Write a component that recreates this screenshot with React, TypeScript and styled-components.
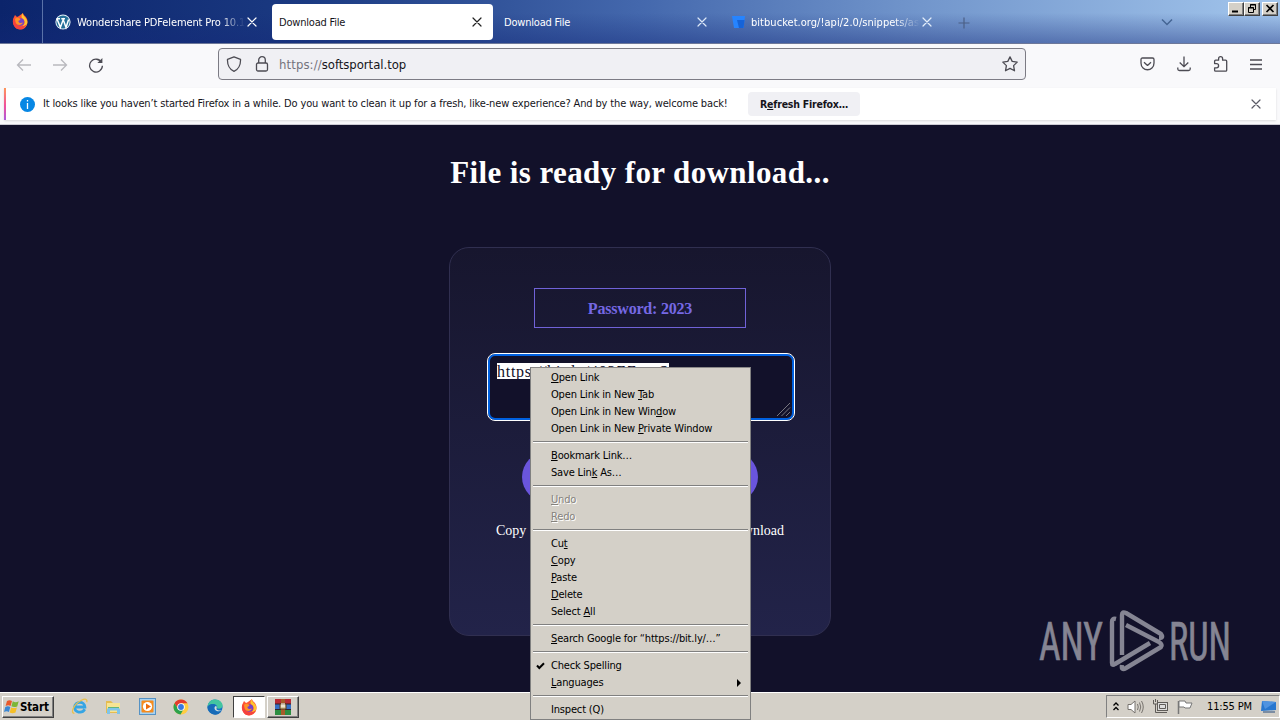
import React from "react";
import styled, { createGlobalStyle, css } from "styled-components";

const GlobalStyle = createGlobalStyle`
  * { box-sizing: border-box; }
  html, body { margin: 0; padding: 0; overflow: hidden; }
  body {
    font-family: "DejaVu Sans Condensed", "DejaVu Sans", sans-serif;
    font-stretch: condensed;
    font-size: 11px;
    color: #15141a;
  }
  svg { display: block; flex: none; }
`

type MenuEntry = { label?: string; k?: number; disabled?: boolean; checked?: boolean; sub?: boolean };

const menu: MenuEntry[] = [
  { label: "Open Link", k: 0 },
  { label: "Open Link in New Tab", k: 17 },
  { label: "Open Link in New Window", k: 20 },
  { label: "Open Link in New Private Window", k: 17 },
  {},
  { label: "Bookmark Link…", k: 0 },
  { label: "Save Link As…", k: 8 },
  {},
  { label: "Undo", k: 0, disabled: true },
  { label: "Redo", k: 0, disabled: true },
  {},
  { label: "Cut", k: 2 },
  { label: "Copy", k: 0 },
  { label: "Paste", k: 0 },
  { label: "Delete", k: 0 },
  { label: "Select All", k: 7 },
  {},
  { label: "Search Google for “https://bit.ly/…”", k: 0 },
  {},
  { label: "Check Spelling", checked: true },
  { label: "Languages", k: 0, sub: true },
  {},
  { label: "Inspect (Q)" },
];

const CloseX = ({ color }: { color: string }) => (
  <svg width="10" height="10" viewBox="0 0 10 10" stroke={color} strokeWidth="1.2" strokeLinecap="round">
    <path d="M1 1L9 9M9 1L1 9" />
  </svg>
);

const FirefoxLogo = () => (
  <svg width="17" height="17" viewBox="0 0 17 17">
    <path d="M2 4L3 2L5 4L7 3C8 2 10 1 11 0C11 2 14 3 15 6C17 11 13 17 8 16.6C2 16.4-1 9 2 4Z" fill="#ff5634" />
    <path d="M11 0C10 3 15 4 15.4 9C15 14 11 16 8 14C13 13 14 8 11 6C9 5 9 2 11 0Z" fill="#ffc52e" />
    <path d="M1 8C1 14 5 17 9 16C12 15.5 14 13.5 15 11C11 14.5 5 14 4 9L2 5Z" fill="#f5413e" />
    <circle cx="8.5" cy="9" r="3.7" fill="#7542c8" />
    <path d="M3 6C5 4 7 5 8.5 6.2C8 7.5 6.5 7.2 6.4 8.3C6.5 10 9 10.5 11 9.6C10 12.5 4.4 13 3.5 9Z" fill="#ff9226" />
  </svg>
);

const EdgeLogo = () => (
  <svg width="16" height="16" viewBox="0 0 16 16">
    <circle cx="8" cy="8" r="7.6" fill="#1572c4" />
    <path d="M.5 8C1 3 4 .4 8 .4C13 .4 16 4 15.6 7C15 10 11.6 10 10 9.2C11 6.5 8 4.5 5 5.2C2.5 5.8 1 7 .5 8Z" fill="#43c5a0" />
    <path d="M.5 8C2 4.7 7 4 9 7C6 7 5.4 10 8 12C10 13.4 12.5 13 14.5 12C12 16 8 16 6 15.3C2.4 14 .5 11 .5 8Z" fill="#176bb7" />
    <path d="M9 7.1C7.4 7.6 7 9.5 8.2 11C10 12.7 13 12.5 14.7 11.5C12 11.8 9 11 9.5 9.4C9.9 8.5 9.9 7.6 9 7.1Z" fill="#d5ddd9" />
  </svg>
);

const ChromeLogo = () => (
  <svg width="16" height="16" viewBox="0 0 16 16">
    <circle cx="8" cy="8" r="7.5" fill="#ffcd41" />
    <path d="M1.5 4.2A7.5 7.5 0 0 1 14.5 4.3H8L5 10Z" fill="#e33b2e" />
    <path d="M1.5 4.2A7.5 7.5 0 0 0 7.5 15.5L11 9.5L5 9.8Z" fill="#2ca24c" />
    <circle cx="8" cy="8" r="3.8" fill="#fff" />
    <circle cx="8" cy="8" r="2.9" fill="#3878e0" />
  </svg>
);

const IeLogo = () => (
  <svg width="17" height="17" viewBox="0 0 17 17" fill="none">
    <path d="M13.8 11.3C11 16 3.5 14.6 3.6 9C4 3 13.6 2.7 13.9 9H5" stroke="#35a5e4" strokeWidth="2.8" />
    <path d="M3.4 15.3C-1 15.6 2.4 6.5 10 2.5C14 .5 16.7.7 15.7 4.2" stroke="#e9c04c" strokeWidth="1.3" />
  </svg>
);

const ExplorerLogo = () => (
  <svg width="17" height="16" viewBox="0 0 17 16">
    <path d="M1 2H6L8 4H14V14H1Z" fill="#e5bc51" />
    <path d="M2 4H15V13H2Z" fill="#f7e492" />
    <path d="M3 8H14V10H3Z" fill="#63b77b" />
    <path d="M2 15V10.5Q2 9 3.6 9H13.4Q15 9 15 10.5V15H12V11.5H5V15Z" fill="#7fc4e9" />
  </svg>
);

const MediaLogo = () => (
  <svg width="17" height="17" viewBox="0 0 17 17">
    <rect x=".5" y=".5" width="16" height="16" fill="#a7d3f3" stroke="#5592c4" />
    <rect x="2.5" y="2.5" width="12" height="12" rx="1" fill="#f68b1d" />
    <circle cx="8.5" cy="8.5" r="4.6" fill="#fff" />
    <path d="M7 5.5L12 8.5L7 11.5Z" fill="#ed6c0d" />
  </svg>
);

const RarLogo = () => (
  <svg width="18" height="16" viewBox="0 0 18 16">
    <path d="M1 0H17V5H1Z" fill="#b92a34" />
    <path d="M1 5H17V10H1Z" fill="#356fc5" />
    <path d="M1 10H17V16H1Z" fill="#2c8e41" />
    <path d="M1 5H17M1 10.5H17" stroke="#33212b" />
    <path d="M7 0H11V16H7Z" fill="#a85c2a" />
    <path d="M6 5H12V10H6Z" fill="#d9c9a0" stroke="#5d3b19" />
    <path d="M8 4V8M10 4V8" stroke="#fff" />
  </svg>
);

const WindowsLogo = () => (
  <svg width="16" height="16" viewBox="0 0 16 16">
    <path d="M3 2Q5.5.4 8 2L6.6 7Q4.4 5.6 1.6 7Z" fill="#e8592b" />
    <path d="M8.8 2.3Q11.5 4 14.7 2.3L13.2 7.4Q10 8.8 7.4 7.3Z" fill="#7cb637" />
    <path d="M1.3 8Q4 6.7 6.3 8.1L4.9 13Q2.7 11.6 0 13Z" fill="#3a87d3" />
    <path d="M7.1 8.4Q10 9.8 12.9 8.4L11.5 13.4Q8.5 15 5.7 13.4Z" fill="#f5bf28" />
  </svg>
);

const App = () => (
  <Screen>
    <GlobalStyle />
    <TabStrip>
      <FirefoxView><FirefoxLogo /></FirefoxView>
      <Tab $w={229} $pl={12}>
        <svg width="16" height="16" viewBox="0 0 16 16">
          <circle cx="8" cy="8" r="7.6" fill="#e7f2f8" />
          <circle cx="8" cy="8" r="6.6" fill="#246f98" />
          <path d="M2 5L5.4 13.4L8.2 5.6L11 13.4L13.6 5.4M1.5 4.8H5M6.3 4.8H10" stroke="#fff" strokeWidth="1.5" fill="none" />
        </svg>
        <TabTitle $w={168} $ml={6} $ls={-0.12} $fade>Wondershare PDFelement Pro 10.1</TabTitle>
        <CloseX color="#fff" />
      </Tab>
      <Tab $w={221} $pl={7} $active>
        <TabTitle $w={193} $ls={-0.2}>Download File</TabTitle>
        <CloseX color="#222" />
      </Tab>
      <Tab $w={230} $pl={11}>
        <TabTitle $w={193} $ls={-0.2}>Download File</TabTitle>
        <CloseX color="#dce8f8" />
      </Tab>
      <Tab $w={230} $pl={9}>
        <svg width="14" height="12" viewBox="0 0 14 12">
          <path d="M0 0H13L11.5 12H2Z" fill="#2684ff" />
          <path d="M5 4H12.5L11.5 12H7Z" fill="#1563d8" />
        </svg>
        <TabTitle $w={169} $ml={5} $ls={0.04} $fade>bitbucket.org/!api/2.0/snippets/as</TabTitle>
        <CloseX color="#e4eefa" />
      </Tab>
      <NewTab>
        <svg width="12" height="12" viewBox="0 0 12 12"><path d="M6 .5V11.5M.5 6H11.5" stroke="#4b5f85" strokeWidth="1.2" /></svg>
      </NewTab>
      <AllTabs>
        <svg width="12" height="8" viewBox="0 0 12 8"><path d="M1 1.5L6 6.5L11 1.5" stroke="#456594" strokeWidth="1.5" fill="none" /></svg>
      </AllTabs>
      <Caption>
        <CaptionButton><svg width="10" height="9" viewBox="0 0 10 9"><path d="M1 7.5H7" stroke="#000" strokeWidth="2" /></svg></CaptionButton>
        <CaptionButton>
          <svg width="10" height="9" viewBox="0 0 10 9" fill="none" stroke="#000"><path d="M3.5 3V.5H8.5V5.5H6.5M3 1H9M1.5 3.5H6.5V8.5H1.5ZM1 4H7" /></svg>
        </CaptionButton>
        <CaptionButton $gap><svg width="10" height="9" viewBox="0 0 10 9"><path d="M1.5 1L8.5 8M8.5 1L1.5 8" stroke="#000" strokeWidth="1.7" /></svg></CaptionButton>
      </Caption>
    </TabStrip>

    <NavBar>
      <NavIcons>
        <svg width="16" height="14" viewBox="0 0 16 14" fill="none" stroke="#b9b9be" strokeWidth="1.3"><path d="M15 7H1.5M7 1.5L1.5 7L7 12.5" /></svg>
        <svg width="16" height="14" viewBox="0 0 16 14" fill="none" stroke="#b9b9be" strokeWidth="1.3"><path d="M1 7H14.5M9 1.5L14.5 7L9 12.5" /></svg>
        <svg width="16" height="16" viewBox="0 0 16 16" fill="none" stroke="#4c4b53" strokeWidth="1.3"><path d="M13.6 5.5A6.4 6.4 0 1 0 14.4 8.8" /><path d="M14.4 1V6H9.4Z" fill="#4c4b53" stroke="none" /></svg>
      </NavIcons>
      <UrlBar>
        <svg width="16" height="16" viewBox="0 0 16 16" fill="none" stroke="#4c4b53" strokeWidth="1.3"><path d="M8 .8L14.5 3.3C14.8 8.6 12.2 13.5 8 15.3C3.8 13.5 1.2 8.6 1.5 3.3Z" strokeLinejoin="round" /></svg>
        <svg width="14" height="16" viewBox="0 0 14 16" fill="none" stroke="#4c4b53" strokeWidth="1.3"><rect x="1.5" y="7" width="11" height="8" rx="1.5" /><path d="M3.7 7V4A3.3 3.3 0 0 1 10.3 4V7" /></svg>
        <Url><span>https://</span>softsportal.top</Url>
        <svg width="16" height="16" viewBox="0 0 16 16" fill="none" stroke="#4c4b53" strokeWidth="1.3" strokeLinejoin="round"><path d="M8 .9L10.2 5.4L15.2 6.1L11.6 9.6L12.5 14.8L8 12.4L3.5 14.8L4.4 9.6L.8 6.1L5.8 5.4Z" /></svg>
      </UrlBar>
      <NavActions>
        <svg width="15" height="14" viewBox="0 0 15 14" fill="none" stroke="#4c4b53" strokeWidth="1.3"><path d="M2.5 1H12.5Q14 1 14 2.5V6C14 15 1 15 1 6V2.5Q1 1 2.5 1ZM4 5.2L7.5 8.4L11 5.2" strokeLinejoin="round" /></svg>
        <svg width="14" height="16" viewBox="0 0 14 16" fill="none" stroke="#4c4b53" strokeWidth="1.3"><path d="M7 .5V10.5M2.7 6.5L7 10.6L11.3 6.5M.8 11.5V13Q.8 14.5 2.5 14.5H11.5Q13.2 14.5 13.2 13V11.5" /></svg>
        <svg width="15" height="16" viewBox="0 0 15 16" fill="none" stroke="#4c4b53" strokeWidth="1.3" strokeLinejoin="round"><path d="M1.6 7.6V5.2Q1.6 4.2 2.6 4.2H5.6V2.7A2 2 0 0 1 9.6 2.7V4.2H12.6Q13.7 4.2 13.7 5.3V14.2Q13.7 15.2 12.7 15.2H2.6Q1.6 15.2 1.6 14.2V11.8H3.5A2 2 0 0 0 3.5 7.6Z" /></svg>
        <svg width="12" height="11" viewBox="0 0 12 11"><path d="M0 1H12M0 5.5H12M0 10H12" stroke="#4c4b53" strokeWidth="1.3" /></svg>
      </NavActions>
    </NavBar>

    <NoticeWrap>
      <Notice>
        <svg width="15" height="15" viewBox="0 0 15 15"><circle cx="7.5" cy="7.5" r="7.5" fill="#0787e4" /><path d="M7.5 3V4.6M7.5 6V12" stroke="#fff" strokeWidth="1.3" /></svg>
        <NoticeText>It looks like you haven’t started Firefox in a while. Do you want to clean it up for a fresh, like-new experience? And by the way, welcome back!</NoticeText>
        <RefreshButton>R<u>e</u>fresh Firefox…</RefreshButton>
        <NoticeClose><CloseX color="#5b5b66" /></NoticeClose>
      </Notice>
    </NoticeWrap>

    <Page>
      <Heading>File is ready for download...</Heading>
      <Card>
        <Password>Password: 2023</Password>
        <LinkBox>
          <mark>https://bit.ly/403ZZmgS</mark>
          <Grip width="14" height="14" viewBox="0 0 14 14" stroke="#77767f"><path d="M0 13L13 0M4.5 13L13 4.5M9 13L13 9" /></Grip>
        </LinkBox>
        <CopyButton />
        <Hint>Copy the link and open in new tab to download</Hint>
      </Card>
      <Watermark width="194" height="66" viewBox="0 0 194 66">
        <g fill="#858593" stroke="#858593" strokeWidth="0.7" fontFamily="Roboto, sans-serif" fontSize="53">
          <text x="1" y="50.5" textLength="64" lengthAdjust="spacingAndGlyphs">ANY</text>
          <text x="131" y="50.5" textLength="62" lengthAdjust="spacingAndGlyphs">RUN</text>
        </g>
        <g fill="none" stroke="#858593" strokeWidth="4.4" strokeLinejoin="round">
          <path d="M78 10Q74 9 74 13V54Q74 57 77 55L112 34" />
          <path d="M84 46V6Q84 2 88 4L123 25Q126 29 121 29" />
          <path d="M84 56Q83 62 88 59L123 38Q125 36 121 33L88 16" />
        </g>
      </Watermark>
    </Page>

    <Taskbar>
      <StartButton><WindowsLogo />Start</StartButton>
      <QuickLaunch>
        <Launch><IeLogo /></Launch>
        <Launch><ExplorerLogo /></Launch>
        <Launch><MediaLogo /></Launch>
        <Launch><ChromeLogo /></Launch>
        <Launch><EdgeLogo /></Launch>
      </QuickLaunch>
      <Task $pressed><FirefoxLogo /></Task>
      <Task><RarLogo /></Task>
      <Tray>
        <svg width="6" height="9" viewBox="0 0 6 9" fill="none" stroke="#000" strokeWidth="1.3"><path d="M.5 3.5L3 1L5.5 3.5M.5 8L3 5.5L5.5 8" /></svg>
        <svg width="17" height="14" viewBox="0 0 17 14" stroke="#77736e" fill="none"><path d="M1 4.5H4L8 1V13L4 9.5H1Z" fill="#fff" /><path d="M10.5 4Q12 7 10.5 10M12.5 2.5Q15 7 12.5 11.5M14.5 1Q18 7 14.5 13" /></svg>
        <svg width="17" height="15" viewBox="0 0 17 15" stroke="#5f5c58" fill="none"><rect x="5.5" y="3.5" width="10" height="8" fill="#ddd" /><path d="M7.5 5.5H13.5V9.5H7.5ZM7 13.5H15M1.5 1V5H5.5V1M3.5 0V3M3.5 5V13.5H8" /></svg>
        <svg width="16" height="14" viewBox="0 0 16 14"><path d="M1.5 1V14" stroke="#777" strokeWidth="1.5" /><path d="M2 1H8L9 3H15L13 8H8L7 7H2Z" fill="#fff" stroke="#777" /></svg>
        <Clock>11:55 PM</Clock>
        <svg width="16" height="13" viewBox="0 0 16 13"><path d="M1 1L15 2V10L0 11Z" fill="#2877cf" /><path d="M1 1L15 2L4 9Z" fill="#4f93e0" /><path d="M2 12H14" stroke="#254a7c" /></svg>
      </Tray>
    </Taskbar>

    <ContextMenu>
      {menu.map(({ label, k, disabled, checked, sub }, i) =>
        label ? (
          <MenuItem key={i} $disabled={disabled}>
            <MenuMark>
              {checked && <svg width="9" height="8" viewBox="0 0 9 8"><path d="M1 3.5L3.3 6L8 1.2" stroke="#000" strokeWidth="2" fill="none" /></svg>}
            </MenuMark>
            <MenuLabel>
              {k === undefined ? label : <>{label.slice(0, k)}<u>{label[k]}</u>{label.slice(k + 1)}</>}
            </MenuLabel>
            {sub && <svg width="4" height="8" viewBox="0 0 4 8"><path d="M0 0L4 4L0 8Z" /></svg>}
          </MenuItem>
        ) : <Separator key={i} />
      )}
    </ContextMenu>
  </Screen>
)

const raised = css`
  background: #d4d0c8;
  border: 1px solid;
  border-color: #fff #404040 #404040 #fff;
  box-shadow: inset -1px -1px #808080;
`

const Screen = styled.div`
  width: 1280px;
  height: 720px;
  display: flex;
  flex-direction: column;
  overflow: hidden;
  position: relative;
  background: #12112a;
`

const TabStrip = styled.div`
  height: 44px;
  display: flex;
  align-items: flex-start;
  background: linear-gradient(180deg, transparent 30%, rgb(20 40 120 / 42%)), linear-gradient(90deg, #0b246b 0%, #1b3a82 24%, #4468ad 50%, #7296cc 72%, #a2c5ec 100%);
  border-bottom: 1px solid #6d7899;
`

const FirefoxView = styled.div`
  width: 43px;
  height: 43px;
  padding: 13px 0 0 12px;
  border-right: 1px solid #5a72a8;
`

const Tab = styled.div<{ $w: number; $pl: number; $active?: boolean }>`
  width: ${p => p.$w}px;
  height: 36px;
  margin-top: 4px;
  padding-left: ${p => p.$pl}px;
  display: flex;
  align-items: center;
  border-radius: 4px;
  color: ${p => (p.$active ? '#15141a' : '#fff')};
  background: ${p => (p.$active ? '#fff' : 'transparent')};
`

const TabTitle = styled.span<{ $w: number; $ml?: number; $ls?: number; $fade?: boolean }>`
  width: ${p => p.$w}px;
  margin-top: 1px;
  margin-left: ${p => p.$ml || 0}px;
  margin-right: ${p => (p.$fade ? 2 : 0)}px;
  letter-spacing: ${p => p.$ls || 0}px;
  white-space: nowrap;
  overflow: hidden;
  ${p => p.$fade && css`mask-image: linear-gradient(90deg, #000 85%, transparent);`}
`

const NewTab = styled.div`
  padding: 17px 0 0 5px;
`

const AllTabs = styled.div`
  margin-left: auto;
  padding: 18px 55px 0 0;
`

const Caption = styled.div`
  display: flex;
  padding: 2px 2px 0 0;
`

const CaptionButton = styled.div<{ $gap?: boolean }>`
  ${raised}
  width: 16px;
  height: 14px;
  margin-left: ${p => (p.$gap ? 2 : 0)}px;
  padding: 1px 0 0 2px;
`

const NavBar = styled.div`
  height: 44px;
  display: flex;
  align-items: flex-start;
  background: #f9f9fb;
`

const NavIcons = styled.div`
  width: 218px;
  height: 41px;
  padding-left: 16px;
  display: flex;
  align-items: center;
  gap: 20px;
`

const UrlBar = styled.div`
  width: 808px;
  height: 32px;
  margin-top: 4px;
  padding: 0 7px;
  display: flex;
  align-items: center;
  gap: 13px;
  background: #f0f0f4;
  border: 1px solid #7c7b84;
  border-radius: 4px;
`

const Url = styled.div`
  flex: 1;
  margin-left: -3px;
  font-size: 13px;
  letter-spacing: -0.04px;
  span {
    color: #74737c;
    letter-spacing: 0.1px;
  }
`

const NavActions = styled.div`
  height: 40px;
  margin-left: auto;
  padding-right: 18px;
  display: flex;
  align-items: center;
  gap: 22px;
`

const NoticeWrap = styled.div`
  height: 37px;
  padding: 0 4px;
  background: #f9f9fb;
  border-bottom: 1px solid #cdccd4;
`

const Notice = styled.div`
  height: 32px;
  display: flex;
  align-items: center;
  padding-left: 14px;
  background: #fff;
  border-left: 2px solid;
  border-image: linear-gradient(#ff9a56, #f0509b 55%, #a85be0) 1;
  box-shadow: 0 1px 2px rgb(0 0 0 / 12%);
`

const NoticeText = styled.span`
  width: 697px;
  margin: -1px 0 0 8px;
  letter-spacing: -0.144px;
  white-space: nowrap;
`

const RefreshButton = styled.div`
  width: 112px;
  height: 24px;
  margin-left: 8px;
  border-radius: 4px;
  background: #f0f0f4;
  font-size: 10.5px;
  font-weight: 700;
  letter-spacing: -0.22px;
  line-height: 25px;
  text-align: center;
  white-space: nowrap;
`

const NoticeClose = styled.div`
  margin-left: auto;
  padding-right: 15px;
`

const Page = styled.div`
  height: 567px;
  position: relative;
  display: flex;
  flex-direction: column;
  align-items: center;
  background: #12112a;
  color: #fff;
  font-family: "Liberation Serif", serif;
`

const Heading = styled.h1`
  margin: 30px 0 0;
  height: 36px;
  font-size: 31px;
  line-height: 36px;
  letter-spacing: 0.39px;
  white-space: nowrap;
`

const Card = styled.div`
  width: 382px;
  height: 389px;
  margin-top: 56px;
  padding-top: 40px;
  display: flex;
  flex-direction: column;
  align-items: center;
  border: 1px solid #302f50;
  border-radius: 20px;
  background: linear-gradient(#17162e, #222349);
`

const Password = styled.div`
  width: 212px;
  height: 40px;
  border: 1px solid #7062d8;
  color: #7668e4;
  font-size: 16px;
  font-weight: 700;
  letter-spacing: -0.2px;
  line-height: 40px;
  text-align: center;
`

const LinkBox = styled.div`
  width: 308px;
  height: 68px;
  margin: 25px 0 0 2px;
  padding: 6px 6px;
  position: relative;
  border: 1px solid #fff;
  border-radius: 8px;
  background: #12112a;
  box-shadow: inset 0 0 0 2px #0060df;
  font-size: 16px;
  line-height: 18px;
  mark {
    display: inline-block;
    margin: 3px 0 0 3px;
    height: 16px;
    line-height: 17px;
    letter-spacing: 0.72px;
    background: #fff;
    color: #12112a;
  }
`

const Grip = styled.svg`
  position: absolute;
  right: 3px;
  bottom: 3px;
`

const CopyButton = styled.div`
  width: 236px;
  height: 50px;
  margin-top: 31px;
  border-radius: 25px;
  background: #6a55dc;
`

const Hint = styled.div`
  margin-top: 20px;
  width: 288px;
  font-size: 14px;
  line-height: 18px;
  white-space: nowrap;
  text-align-last: justify;
`

const Watermark = styled.svg`
  position: absolute;
  left: 1038px;
  top: 484px;
`

const Taskbar = styled.div`
  height: 28px;
  padding: 2px 0 0 2px;
  display: flex;
  background: #d4d0c8;
  border-top: 1px solid #fff;
`

const StartButton = styled.div`
  ${raised}
  width: 52px;
  height: 22px;
  margin-top: 1px;
  padding-left: 1px;
  display: flex;
  align-items: center;
  color: #000;
  font-size: 11.5px;
  font-weight: 700;
  letter-spacing: -0.15px;
`

const QuickLaunch = styled.div`
  display: flex;
  padding-left: 8px;
`

const Launch = styled.div`
  width: 34px;
  height: 23px;
  display: flex;
  align-items: center;
  justify-content: center;
  &:last-child { margin-right: 1px; }
`

const Task = styled.div<{ $pressed?: boolean }>`
  ${raised}
  width: 32px;
  height: 22px;
  margin: 1px 2px 0 0;
  display: flex;
  align-items: center;
  justify-content: center;
  ${p => p.$pressed && css`
    background: #fff;
    border-color: #404040 #fff #fff #404040;
    box-shadow: none;
  `}
`

const Tray = styled.div`
  width: 174px;
  height: 23px;
  margin: 0 0 0 auto;
  padding-left: 6px;
  display: flex;
  align-items: center;
  gap: 8px;
  border: 1px solid;
  border-color: #808080 #fff #fff #808080;
  color: #000;
`

const Clock = styled.span`
  width: 46px;
  margin-left: 6px;
  letter-spacing: -0.15px;
  white-space: nowrap;
`

const ContextMenu = styled.div`
  position: absolute;
  left: 530px;
  top: 367px;
  width: 221px;
  height: 353px;
  padding: 1px 2px;
  background: #d4d0c8;
  border: 1px solid #808080;
  border-top-color: #8a8888;
  color: #000;
`

const MenuItem = styled.div<{ $disabled?: boolean }>`
  height: 17px;
  padding-right: 7px;
  display: flex;
  align-items: center;
  line-height: 16px;
  ${p => p.$disabled && css`
    color: #85827d;
    text-shadow: 1px 1px #fff;
  `}
`

const MenuMark = styled.div`
  width: 18px;
  padding-left: 3px;
`

const MenuLabel = styled.span`
  flex: 1;
  letter-spacing: -0.17px;
  white-space: nowrap;
`

const Separator = styled.div`
  height: 2px;
  margin: 4px 0;
  border-top: 1px solid #808080;
  border-bottom: 1px solid #fff;
`

export default App;
